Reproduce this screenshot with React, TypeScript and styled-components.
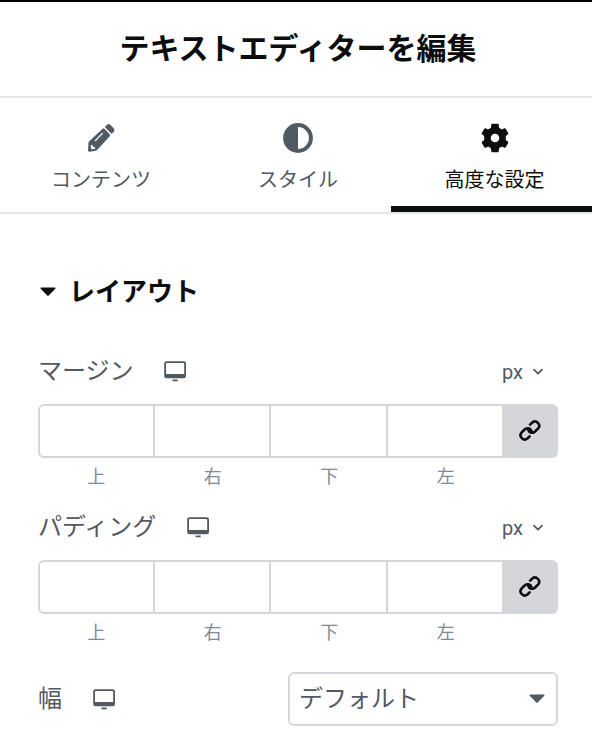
import React from 'react';
import styled, { createGlobalStyle } from 'styled-components';

const ink = '#0c0d0e';
const slate = '#515962';
const muted = '#818a96';
const line = '#d5d6da';
const divider = '#e6e6e6';

const GlobalStyle = createGlobalStyle`
  * { box-sizing: border-box; }
  body {
    margin: 0;
    background: #fff;
    color: ${slate};
    font-family: Roboto, "Noto Sans CJK JP", sans-serif;
  }
  button { font: inherit; color: inherit; padding: 0; margin: 0; border: 0; background: none; }
  input { font: inherit; padding: 0; margin: 0; }
  svg { display: block; flex: none; }
`;

const Viewport = styled.main`
  width: 592px;
  height: 750px;
  overflow: hidden;
  border-top: 2px solid #000;
`;

const Panel = styled.div`
  width: 600px;
  margin-left: -2px;
`;

const Header = styled.header`
  display: flex;
  align-items: center;
  justify-content: center;
  height: 96px;
  border-bottom: 2px solid ${divider};
`;

const Title = styled.h1`
  margin: 0;
  font-size: 30px;
  line-height: 40px;
  font-weight: 700;
  color: ${ink};
  white-space: nowrap;
`;

const Tabs = styled.nav`
  display: grid;
  grid-template-columns: 206px 188px 206px;
  height: 116px;
  border-bottom: 2px solid ${divider};
`;

const Tab = styled.button<{ $active?: boolean }>`
  display: flex;
  flex-direction: column;
  align-items: center;
  padding-top: 25px;
  gap: 12px;
  font-size: 20px;
  line-height: 30px;
  color: ${(p) => (p.$active ? ink : slate)};
  border-bottom: 6px solid ${(p) => (p.$active ? ink : 'transparent')};
  &:last-child { margin-left: -1px; }
`;

const Section = styled.section`
  padding: 58px 40px 0;
`;

const SectionHeading = styled.h2`
  display: flex;
  align-items: center;
  gap: 12px;
  height: 40px;
  margin: 0 0 39px;
  padding-left: 1px;
  font-size: 26px;
  line-height: 42px;
  font-weight: 700;
  color: ${ink};
`;

const Field = styled.div`
  height: 156px;
`;

const FieldHeader = styled.div`
  display: flex;
  align-items: center;
  height: 40px;
  margin-bottom: 13px;
`;

const Label = styled.label<{ $gap: number }>`
  font-size: 24px;
  line-height: 36px;
  margin-right: ${(p) => p.$gap}px;
  white-space: nowrap;
`;

const UnitButton = styled.button`
  display: flex;
  align-items: center;
  gap: 9px;
  margin: 1px 14px 0 auto;
  font-size: 20px;
  line-height: 24px;
`;

const Dimensions = styled.div`
  display: grid;
  grid-template-columns: repeat(4, 116.5px) 54px;
  height: 54px;
`;

const DimensionInput = styled.input`
  width: 100%;
  height: 54px;
  border: 2px solid ${line};
  border-left-width: 0;
  background: #fff;
  outline: none;
  &:first-child {
    border-left-width: 2px;
    border-radius: 6px 0 0 6px;
  }
`;

const LinkButton = styled.button`
  display: flex;
  align-items: center;
  justify-content: center;
  padding: 0 2px 1px 0;
  background: ${line};
  border-radius: 0 6px 6px 0;
  color: ${ink};
`;

const DimensionLabels = styled.div`
  display: grid;
  grid-template-columns: repeat(4, 116.5px);
  margin-top: 6px;
  font-size: 18px;
  line-height: 26px;
  text-align: center;
  color: ${muted};
`;

const SelectRow = styled.div`
  display: flex;
  align-items: center;
  height: 54px;
  margin-top: 9px;
`;

const Select = styled.button`
  display: flex;
  align-items: center;
  justify-content: space-between;
  width: 270px;
  height: 54px;
  margin-left: auto;
  padding: 0 10px 0 9px;
  border: 2px solid ${line};
  border-radius: 6px;
  font-size: 24px;
  line-height: 36px;
`;

const PencilIcon = () => (
  <svg width="28" height="30" viewBox="0 0 28 30" fill="currentColor">
    <path d="M18.500 3.300 20.400 1.500q1.400-1.100 2.900.2l3.600 3.800q1.100 1.500 0 2.900L25.400 10.200q-.8.800-1.500.1l-5.400-5.600q-.6-.7 0-1.400Z" />
    <path fillRule="evenodd" d="M15.700 5.700q.9-.8 1.800.1l5.400 5.700q.8.900-.1 1.800L10.300 26.800q-.7.700-1.600.9l-6.300 1q-1.600.1-1.400-1.400l.5-7.500q.1-.8.700-1.500ZM8.900 18.100l7-7.300q.4-.7 0-1-.5-.3-1 .1l-7 7.300q-.4.600 0 .9.500.400 1 0ZM3.900 22l-.1 3.100 1.200 1.200 3.300-.5-.6-1.900-1.900-.1-.3-1.800Z" />
  </svg>
);

const ContrastIcon = () => (
  <svg width="30" height="30" viewBox="0 0 30 30">
    <circle cx="15" cy="15" r="12.9" fill="none" stroke="currentColor" strokeWidth="4" />
    <path d="M15 2a13 13 0 0 0 0 26Z" fill="currentColor" />
  </svg>
);

const GearIcon = () => (
  <svg width="28" height="30" viewBox="0 0 28 30" fill="currentColor">
    <path
      fillRule="evenodd"
      d="M10.300 1.500q.1-.8.900-.8h5.600q.8 0 .9.800l.4 3.200 2.700 1.700 2.600-1.100q.9-.3 1.300.4l2.500 4.300q.4.800-.2 1.300l-2.200 1.700v4l2.200 1.700q.6.500.2 1.300l-2.500 4.300q-.4.700-1.300.4l-2.600-1.100-2.700 1.700-.4 3.200q-.1.800-.9.800h-5.600q-.8 0-.9-.8l-.4-3.200-2.700-1.700-2.600 1.100q-.9.300-1.300-.4L.8 20q-.4-.8.2-1.300L3.200 17v-4L1 11.300q-.6-.5-.2-1.300l2.500-4.300q.4-.7 1.300-.4l2.600 1.100 2.700-1.700ZM14 10.700a4.300 4.300 0 1 0 0 8.600 4.300 4.300 0 0 0 0-8.600Z"
    />
  </svg>
);

const CaretIcon = () => (
  <svg width="18" height="10" viewBox="0 0 18 10" fill="currentColor">
    <path d="M2.100.4h13.800q1.200.2.4 1.300L9.800 8.400q-.8.700-1.600 0L1.700 1.700Q.9.600 2.100.4Z" />
  </svg>
);

const ChevronIcon = () => (
  <svg width="12" height="8" viewBox="0 0 12 8" fill="none" stroke="currentColor" strokeWidth="1.8" strokeLinecap="round" strokeLinejoin="round">
    <path d="m2 1.700 4 4 4-4" />
  </svg>
);

const DesktopIcon = () => (
  <svg width="24" height="22" viewBox="0 0 24 22" fill="currentColor">
    <path fillRule="evenodd" d="M3.500 1.300h17.200Q23 1.300 23 3.600v12.400q0 2.300-2.300 2.300H3.500Q1.200 18.300 1.200 16V3.600Q1.200 1.300 3.500 1.300ZM3.900 3.100q-.9 0-.9.900v10h18.200V4q0-.9-.9-.9Z" />
    <path d="M9.500 19.500h5.200v1.800H9.500Z" />
  </svg>
);

const ChainIcon = () => (
  <svg width="22" height="21" viewBox="0 0 22 21" fill="none" stroke="currentColor" strokeWidth="2.600" strokeLinecap="round">
    <path d="M11.100 4.700 13.300 2.500A4.200 4.200 0 0 1 19.200 8.400L16.100 11.500A4.200 4.200 0 0 1 9.150 9.850" />
    <path d="M10.600 16.300 8.400 18.500A4.200 4.200 0 0 1 2.500 12.600L5.600 9.500A4.200 4.200 0 0 1 12.550 11.150" />
  </svg>
);

const sides = ['上', '右', '下', '左'];

const DimensionField = ({ label, gap }: { label: string; gap: number }) => (
  <Field>
    <FieldHeader>
      <Label $gap={gap}>{label}</Label>
      <DesktopIcon />
      <UnitButton>
        px
        <ChevronIcon />
      </UnitButton>
    </FieldHeader>
    <Dimensions>
      {sides.map((side) => (
        <DimensionInput key={side} aria-label={`${label} ${side}`} />
      ))}
      <LinkButton>
        <ChainIcon />
      </LinkButton>
    </Dimensions>
    <DimensionLabels>
      {sides.map((side) => (
        <span key={side}>{side}</span>
      ))}
    </DimensionLabels>
  </Field>
);

export default function App() {
  return (
    <>
      <GlobalStyle />
      <Viewport>
        <Panel>
          <Header>
            <Title>テキストエディターを編集</Title>
          </Header>
          <Tabs>
            <Tab>
              <PencilIcon />
              コンテンツ
            </Tab>
            <Tab>
              <ContrastIcon />
              スタイル
            </Tab>
            <Tab $active>
              <GearIcon />
              高度な設定
            </Tab>
          </Tabs>
          <Section>
            <SectionHeading>
              <CaretIcon />
              レイアウト
            </SectionHeading>
            <DimensionField label="マージン" gap={29} />
            <DimensionField label="パディング" gap={30} />
            <SelectRow>
              <Label $gap={30}>幅</Label>
              <DesktopIcon />
              <Select>
                デフォルト
                <CaretIcon />
              </Select>
            </SelectRow>
          </Section>
        </Panel>
      </Viewport>
    </>
  );
}
